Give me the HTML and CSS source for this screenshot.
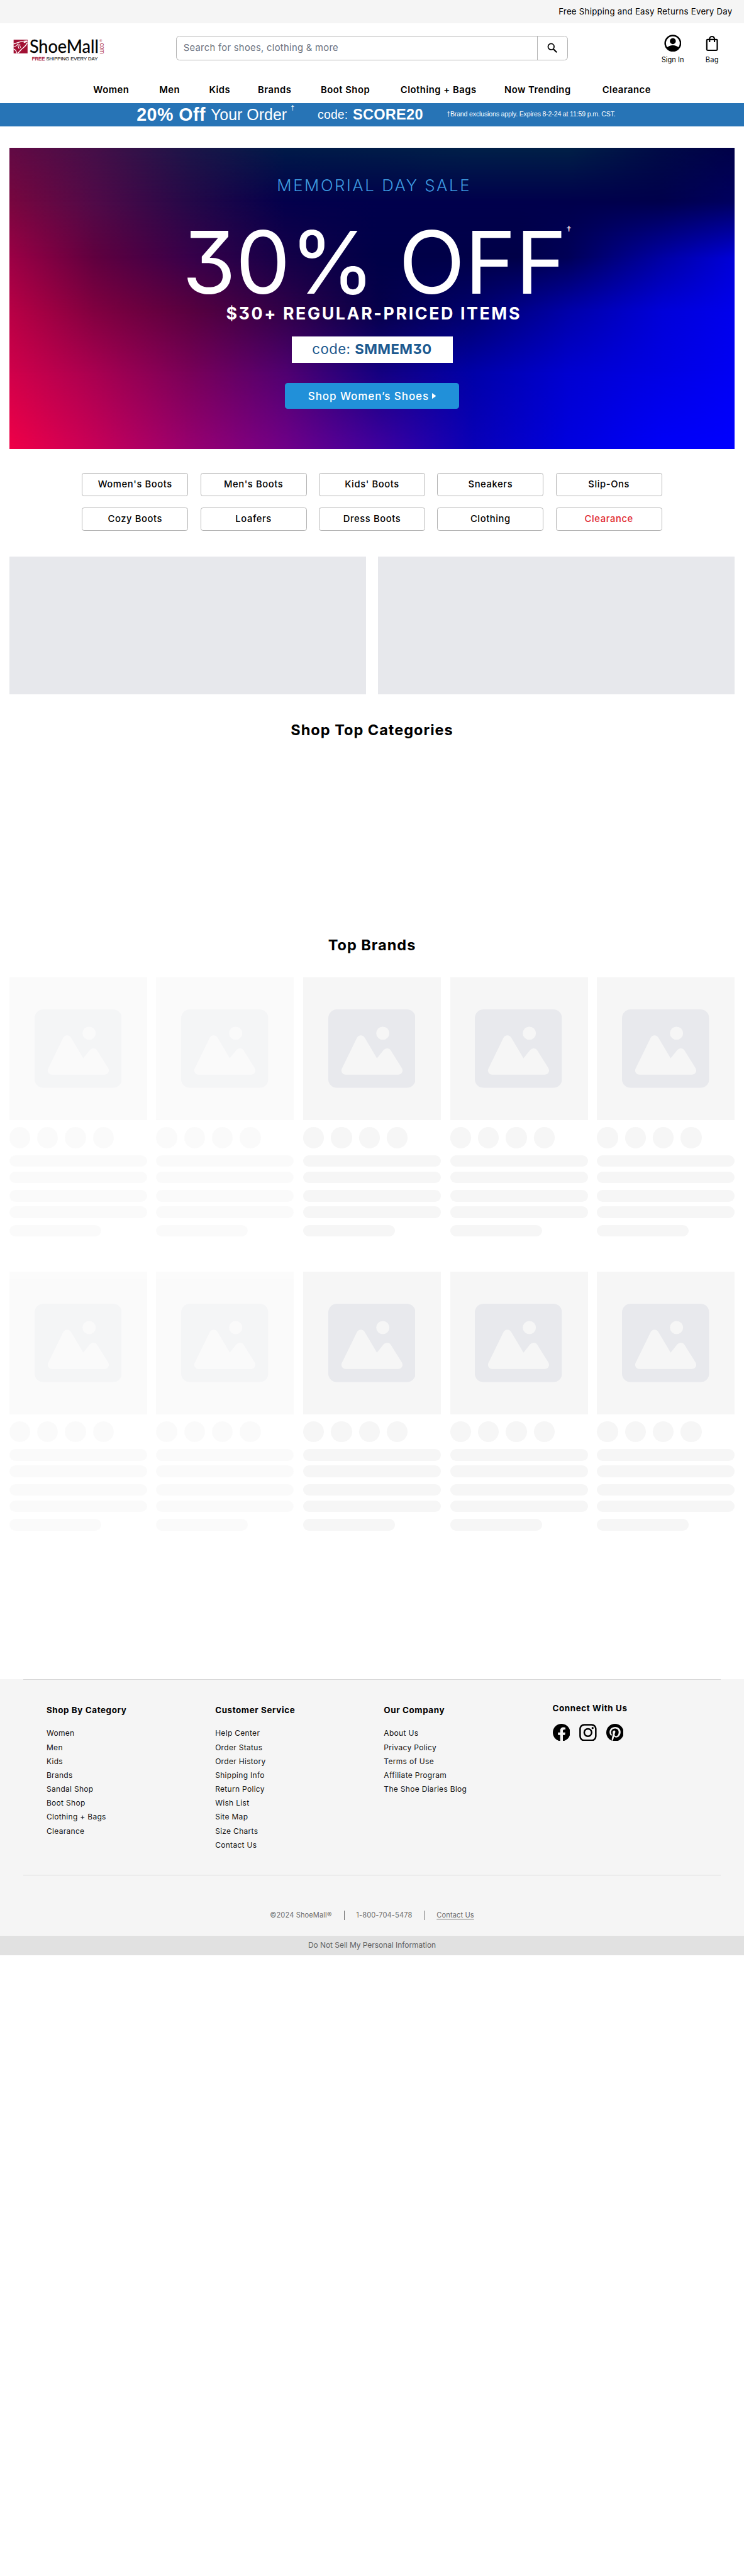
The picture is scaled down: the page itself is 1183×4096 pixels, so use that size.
FILE: index.html
```html
<!DOCTYPE html>
<html lang="en">
<head>
<meta charset="utf-8">
<title>ShoeMall</title>
<link rel="stylesheet" href="styles.css">
</head>
<body>
<svg width="0" height="0" class="sprite" aria-hidden="true">
  <symbol id="picture" viewBox="0 0 150 135">
    <rect width="150" height="135" rx="15" fill="#e8e9ed"/>
    <circle cx="93.8" cy="41" r="11.3" fill="#f6f6f6"/>
    <path fill="#f6f6f6" d="M23.6 101.500L49.500 48.500Q52 44.700 56 44.700Q60 44.700 62.500 48.500L83.700 84L95 70Q97.500 67 101 67Q105 67 107.500 70.500L126.500 101Q129 105.500 126.500 109Q124.500 112.300 120 112.300H30Q26 112.300 23.800 109Q21.500 105.500 23.600 101.500Z"/>
  </symbol>
</svg>
<div class="page">
  <div class="topbar">Free Shipping and Easy Returns Every Day</div>
  <header>
    <div class="masthead">
      <svg class="logo" viewBox="0 0 160 42" width="160" height="42">
        <rect x="0.700" y="2.300" width="24" height="23.500" fill="#a11033"/>
        <g fill="none" stroke="#fff" stroke-linecap="round">
          <path d="M1 9.500C8 7.500 14 4 23.500 4.500" stroke-width="1.600"/>
          <path d="M24 8C21 15 17 16 13.500 19.500C12 21.500 10 24 8 25" stroke-width="1.500"/>
          <path d="M1 14C4 14.500 6 12 8.500 9.500M1 18.500C3 19 5 21 6 25" stroke-width="1.300"/>
          <path d="M8.500 10.500C8 13 9 15.500 10 17.500M11.500 10C11 12 11.800 14 12.500 15.500" stroke-width="1.200"/>
          <path d="M19 7L23.500 5" stroke-width="2"/>
        </g>
        <text class="logo-name" x="28" y="25" textLength="119" lengthAdjust="spacingAndGlyphs">ShoeMall</text>
        <text class="logo-com" transform="translate(149 8) rotate(90)" textLength="18.500" lengthAdjust="spacingAndGlyphs">com</text>
        <text class="logo-reg" x="148.500" y="6">®</text>
        <text class="logo-tag" x="32.300" y="38" textLength="113" lengthAdjust="spacingAndGlyphs"><tspan class="logo-free">FREE</tspan> SHIPPING EVERY DAY</text>
      </svg>
      <div class="search">
        <div class="search-field">Search for shoes, clothing &amp; more</div>
        <div class="search-go">
          <svg viewBox="0 0 18 18" width="18" height="18" fill="none" stroke="#000" stroke-width="1.900"><circle cx="6.800" cy="6.800" r="5.200"/><path d="M10.500 10.500L16.500 16.500" stroke-width="2.300"/></svg>
        </div>
      </div>
      <div class="account">
        <svg viewBox="0 0 30 30" width="30" height="30"><circle cx="15" cy="14.800" r="13.200" fill="none" stroke="#000" stroke-width="2.700"/><circle cx="15" cy="11.300" r="5.100"/><path d="M4.500 22.500Q9 18.300 15 18.300Q21 18.300 25.500 22.500Q21.500 28.500 15 28.500Q8.500 28.500 4.500 22.500Z"/></svg>
        <span>Sign In</span>
      </div>
      <div class="account bag">
        <svg viewBox="0 0 22 30" width="22" height="30" fill="none" stroke="#000" stroke-width="2.300"><rect x="2" y="8.500" width="18" height="18.500" rx="1.500"/><path d="M6.800 13V7.500a4.200 4.200 0 0 1 8.400 0V13"/></svg>
        <span>Bag</span>
      </div>
    </div>
    <nav class="menu">
      <a>Women</a><a>Men</a><a>Kids</a><a>Brands</a><a>Boot Shop</a><a>Clothing + Bags</a><a>Now Trending</a><a>Clearance</a>
    </nav>
  </header>
  <div class="promo">
    <b class="promo-off">20% Off</b><span class="promo-order">Your Order</span><span class="promo-dagger">†</span><span class="promo-code">code:</span><b class="promo-score">SCORE20</b><span class="promo-note">†Brand exclusions apply. Expires 8-2-24 at 11:59 p.m. CST.</span>
  </div>

  <section class="hero">
    <div class="tint tint-5"></div><div class="tint tint-4"></div><div class="tint tint-3"></div><div class="tint tint-2"></div><div class="tint tint-1"></div><div class="tint tint-0"></div>
    <div class="hero-copy">
      <div class="hero-sale">MEMORIAL DAY SALE</div>
      <div class="hero-big">30% OFF<span class="hero-dagger">†</span></div>
      <div class="hero-items">$30+ REGULAR-PRICED ITEMS</div>
      <div class="hero-code"><span>code:</span> <b>SMMEM30</b></div>
      <div class="hero-button">Shop Women’s Shoes<svg viewBox="0 0 7 10" width="7" height="10"><path d="M0 0L7 5L0 10Z" fill="#fff"/></svg></div>
    </div>
  </section>

  <div class="shortcuts">
    <a>Women's Boots</a><a>Men's Boots</a><a>Kids' Boots</a><a>Sneakers</a><a>Slip-Ons</a>
    <a>Cozy Boots</a><a>Loafers</a><a>Dress Boots</a><a>Clothing</a><a class="sale">Clearance</a>
  </div>

  <div class="banners"><div></div><div></div></div>

  <h2 class="categories-title">Shop Top Categories</h2>
  <h2 class="brands-title">Top Brands</h2>

  <div class="cards" id="cards">
    <div class="card faded"><div class="thumb"><svg width="150" height="135"><use href="#picture"/></svg></div><div class="dots"><i></i><i></i><i></i><i></i></div><div class="bar"></div><div class="bar near"></div><div class="bar"></div><div class="bar near"></div><div class="bar short"></div></div>
    <div class="card faded"><div class="thumb"><svg width="150" height="135"><use href="#picture"/></svg></div><div class="dots"><i></i><i></i><i></i><i></i></div><div class="bar"></div><div class="bar near"></div><div class="bar"></div><div class="bar near"></div><div class="bar short"></div></div>
    <div class="card"><div class="thumb"><svg width="150" height="135"><use href="#picture"/></svg></div><div class="dots"><i></i><i></i><i></i><i></i></div><div class="bar"></div><div class="bar near"></div><div class="bar"></div><div class="bar near"></div><div class="bar short"></div></div>
    <div class="card"><div class="thumb"><svg width="150" height="135"><use href="#picture"/></svg></div><div class="dots"><i></i><i></i><i></i><i></i></div><div class="bar"></div><div class="bar near"></div><div class="bar"></div><div class="bar near"></div><div class="bar short"></div></div>
    <div class="card"><div class="thumb"><svg width="150" height="135"><use href="#picture"/></svg></div><div class="dots"><i></i><i></i><i></i><i></i></div><div class="bar"></div><div class="bar near"></div><div class="bar"></div><div class="bar near"></div><div class="bar short"></div></div>
    <div class="card faded"><div class="thumb"><svg width="150" height="135"><use href="#picture"/></svg></div><div class="dots"><i></i><i></i><i></i><i></i></div><div class="bar"></div><div class="bar near"></div><div class="bar"></div><div class="bar near"></div><div class="bar short"></div></div>
    <div class="card faded"><div class="thumb"><svg width="150" height="135"><use href="#picture"/></svg></div><div class="dots"><i></i><i></i><i></i><i></i></div><div class="bar"></div><div class="bar near"></div><div class="bar"></div><div class="bar near"></div><div class="bar short"></div></div>
    <div class="card"><div class="thumb"><svg width="150" height="135"><use href="#picture"/></svg></div><div class="dots"><i></i><i></i><i></i><i></i></div><div class="bar"></div><div class="bar near"></div><div class="bar"></div><div class="bar near"></div><div class="bar short"></div></div>
    <div class="card"><div class="thumb"><svg width="150" height="135"><use href="#picture"/></svg></div><div class="dots"><i></i><i></i><i></i><i></i></div><div class="bar"></div><div class="bar near"></div><div class="bar"></div><div class="bar near"></div><div class="bar short"></div></div>
    <div class="card"><div class="thumb"><svg width="150" height="135"><use href="#picture"/></svg></div><div class="dots"><i></i><i></i><i></i><i></i></div><div class="bar"></div><div class="bar near"></div><div class="bar"></div><div class="bar near"></div><div class="bar short"></div></div>
  </div>

  <footer>
    <div class="columns">
      <div><h3>Shop By Category</h3><a>Women</a><a>Men</a><a>Kids</a><a>Brands</a><a>Sandal Shop</a><a>Boot Shop</a><a>Clothing + Bags</a><a>Clearance</a></div>
      <div><h3>Customer Service</h3><a>Help Center</a><a>Order Status</a><a>Order History</a><a>Shipping Info</a><a>Return Policy</a><a>Wish List</a><a>Site Map</a><a>Size Charts</a><a>Contact Us</a></div>
      <div><h3>Our Company</h3><a>About Us</a><a>Privacy Policy</a><a>Terms of Use</a><a>Affiliate Program</a><a>The Shoe Diaries Blog</a></div>
      <div class="connect"><h3>Connect With Us</h3>
        <div class="social">
          <svg viewBox="2 2 20 20" width="30" height="30"><path d="M22 12c0-5.520-4.480-10-10-10S2 6.480 2 12c0 4.990 3.660 9.130 8.440 9.880v-6.990H7.900V12h2.540V9.800c0-2.510 1.490-3.890 3.780-3.890 1.090 0 2.240.19 2.240.19v2.460h-1.260c-1.240 0-1.630.77-1.630 1.560V12h2.780l-.45 2.890h-2.330v6.990C18.340 21.130 22 16.990 22 12z"/></svg>
          <svg viewBox="0 0 30 30" width="30" height="30" fill="none" stroke="#000" stroke-width="2.700"><rect x="1.500" y="1.500" width="27" height="27" rx="7"/><circle cx="15" cy="15" r="6.400"/><circle cx="23" cy="7.200" r="1.800" fill="#000" stroke="none"/></svg>
          <svg viewBox="2 2 20 20" width="30" height="30"><path d="M9.040 21.540c.96.29 1.930.46 2.960.46a10 10 0 0 0 10-10A10 10 0 0 0 12 2 10 10 0 0 0 2 12c0 4.250 2.670 7.900 6.440 9.340-.09-.78-.18-2.070 0-2.960l1.150-4.940s-.29-.58-.29-1.500c0-1.380.86-2.410 1.840-2.410.86 0 1.260.63 1.260 1.440 0 .86-.57 2.090-.86 3.270-.17.98.52 1.840 1.520 1.840 1.780 0 3.160-1.900 3.160-4.580 0-2.400-1.720-4.040-4.190-4.040-2.820 0-4.480 2.100-4.480 4.310 0 .86.28 1.730.74 2.300.09.06.09.14.06.29l-.29 1.090c0 .17-.11.23-.28.11-1.280-.56-2.020-2.380-2.020-3.850 0-3.160 2.240-6.030 6.560-6.030 3.440 0 6.120 2.470 6.120 5.750 0 3.440-2.130 6.200-5.180 6.200-.97 0-1.920-.52-2.260-1.130l-.67 2.370c-.23.86-.86 2.010-1.290 2.700z"/></svg>
        </div>
      </div>
    </div>
    <div class="legal"><span>©2024 ShoeMall®</span><span>1-800-704-5478</span><span><u>Contact Us</u></span></div>
    <div class="privacy">Do Not Sell My Personal Information</div>
  </footer>
</div>
</body>
</html>
```

FILE: styles.css
```css
* { box-sizing: border-box; }
html { background: #fff; }
body { margin: 0; overflow-x: hidden; }
.sprite { position: absolute; }
.page {
  zoom: 0.92422;
  width: 1280px;
  height: 4431px;
  overflow: hidden;
  font-family: Inter, "Noto Sans", sans-serif;
  font-size: 16px;
  color: #000;
  background: #fff;
}
svg { display: block; flex: none; }

/* Header */
.topbar {
  height: 40px;
  padding: 0 20px 1px 0;
  line-height: 39px;
  background: #f5f5f5;
  font-size: 14.300px;
  letter-spacing: 0.300px;
  text-align: right;
}
.masthead { display: flex; height: 86px; padding: 20px 43.500px 0 23px; align-items: flex-start; }
.logo { margin-top: 6px; overflow: visible; }
.logo-name { font: 400 32px Lato, sans-serif; stroke: #000; stroke-width: 0.300px; }
.logo-com { font: 400 12px "Liberation Sans", sans-serif; fill: #a11033; }
.logo-reg { font: 400 6px "Liberation Sans", sans-serif; fill: #a11033; }
.logo-tag { font: 400 8.500px "Liberation Sans", sans-serif; fill: #111; stroke: #111; stroke-width: 0.150px; }
.logo-free { fill: #a11033; stroke: #a11033; stroke-width: 0.350px; }
.search {
  display: flex;
  width: 674px;
  height: 42px;
  margin: 2px auto 0 120px;
  border: 1px solid #b3b3b3;
  border-radius: 6px;
}
.search-field { flex: 1; padding-left: 11.500px; line-height: 40px; color: #6b7280; letter-spacing: 0.330px; }
.search-go { display: flex; width: 52px; align-items: center; justify-content: center; border-left: 1px solid #b3b3b3; }
.account { display: flex; flex-direction: column; align-items: center; font-size: 12px; line-height: 16px; white-space: nowrap; }
.account span { margin-top: 5px; }
.bag { margin-left: 37px; letter-spacing: 0.300px; }
.menu {
  display: grid;
  grid-template-columns: 113.500px 85.700px 84px 108.200px 137.200px 178.600px 168.500px auto;
  height: 51px;
  padding: 19px 0 0 160.500px;
  line-height: 20px;
  font-weight: 600;
  letter-spacing: 0.550px;
}

/* Promo strip */
.promo {
  display: grid;
  grid-template-columns: 127.500px 138px 46px 60.500px 161.500px auto;
  align-items: center;
  height: 41px;
  padding-left: 235px;
  background: #2774b6;
  color: #fff;
  font-family: "Liberation Sans", Arial, sans-serif;
  line-height: 1;
  white-space: nowrap;
}
.promo-off { font-size: 31px; letter-spacing: 0.500px; }
.promo-order { font-size: 27px; letter-spacing: 0; }
.promo-dagger { align-self: start; margin-top: 4px; font-size: 11px; }
.promo-code { font-size: 21px; letter-spacing: 0.200px; }
.promo-score { font-size: 25.500px; letter-spacing: 0.300px; }
.promo-note { margin-top: -3px; font-size: 11.500px; letter-spacing: -0.200px; }

/* Hero */
.hero { position: relative; height: 518.500px; margin: 36.500px 16px 0; color: #fff; }
.tint { position: absolute; inset: 0; }
.tint-0 {
  background: linear-gradient(90deg, #620a44, #440f48 11.800%, #1c1548 24.900%, #001a48 38%, #001c48 51%, #002048 64%, #002046 77%, #000a46 90%, #000048);
  mask-image: linear-gradient(#000, transparent 18%);
}
.tint-1 {
  background: linear-gradient(90deg, #78063f, #500a48 11.800%, #250848 24.900%, #04004c 38%, #00004c 51%, #00004c 90%, #000060);
  mask-image: linear-gradient(#000 18%, transparent 36.500%);
}
.tint-2 {
  background: linear-gradient(90deg, #9c0045, #60003f 11.800%, #38004a 24.900%, #150048 38%, #000048 51%, #000048 70%, #000058 77%, #0000a4 90%, #0000d8);
  mask-image: linear-gradient(#000 36.500%, transparent 54%);
}
.tint-3 {
  background: linear-gradient(90deg, #b80045, #800040 11.800%, #58003f 24.900%, #300048 38%, #06004a 51%, #00006c 64%, #0000a8 77%, #0000d8 90%, #0000ec);
  mask-image: linear-gradient(#000 54%, transparent 74.500%);
}
.tint-4 {
  background: linear-gradient(90deg, #d0004a, #a80050 11.800%, #780058 24.900%, #500070 38%, #140080 51%, #0000a8 64%, #0000d0 77%, #0000e4 90%, #0000f4);
  mask-image: linear-gradient(#000 74.500%, transparent);
}
.tint-5 {
  background: linear-gradient(90deg, #f00048, #c80058 11.800%, #980070 24.900%, #700088 38%, #4000a0 51%, #0a00b8 64%, #0000e0 77%, #0000f8 90%, #0000ff);
}
.hero-copy { position: relative; display: flex; flex-direction: column; align-items: center; height: 100%; padding-top: 50px; white-space: nowrap; }
.hero-sale { padding-left: 7px; font-size: 28px; font-weight: 350; line-height: 30px; letter-spacing: 2.750px; color: #3d9be0; }
.hero-big { position: relative; margin-top: 42px; padding-left: 8px; font-size: 149px; line-height: 150px; letter-spacing: -0.500px; font-feature-settings: "cv09"; }
.hero-dagger { position: absolute; left: 100%; top: 8px; font-size: 18px; line-height: 24px; }
.hero-items { margin-top: -0.500px; padding-left: 6px; font-size: 29px; font-weight: 700; line-height: 28px; letter-spacing: 2.800px; font-feature-settings: "cv09"; }
.hero-code {
  width: 277px;
  height: 46px;
  margin-top: 24.500px;
  background: #fff;
  color: #1c5a90;
  font-size: 24px;
  line-height: 44px;
  letter-spacing: 0.500px;
  text-align: center;
  font-feature-settings: "cv09";
}
.hero-button {
  display: flex;
  align-items: center;
  justify-content: center;
  gap: 5px;
  width: 300px;
  height: 45px;
  margin-top: 34px;
  border-radius: 5px;
  background: #2190d9;
  font-size: 18.500px;
  font-weight: 550;
  letter-spacing: 0.950px;
}

/* Shortcut buttons */
.shortcuts {
  display: grid;
  grid-template-columns: repeat(5, 1fr);
  gap: 20px 21px;
  margin: 40.300px 141px 0;
}
.shortcuts a { height: 40px; border: 1px solid #b3b3b3; border-radius: 4px; line-height: 38px; font-weight: 450; letter-spacing: 0.650px; text-align: center; }
.shortcuts .sale { color: #e0242b; }

.banners { display: grid; grid-template-columns: 1fr 1fr; gap: 20px; margin: 44.700px 16px 0; }
.banners div { height: 237px; background: #e7e8ec; }

h2 { margin: 0; font-size: 25.500px; line-height: 30px; font-weight: 700; letter-spacing: 1.050px; text-align: center; }
.categories-title { margin-top: 46px; }
.brands-title { margin-top: 340px; }

/* Loading cards */
.cards { display: grid; grid-template-columns: repeat(5, 1fr); gap: 60px 16px; margin: 40.500px 16px 0; }
.card { height: 446px; }
.faded { opacity: 0.450; }
.thumb { height: 246px; padding-top: 55.600px; background: #f6f6f6; }
.thumb svg { margin-left: 43px; }
.dots { display: flex; gap: 12px; margin-top: 12px; }
.dots i { width: 36px; height: 36px; border-radius: 50%; background: #f6f6f6; }
.bar { height: 20px; margin-top: 12px; border-radius: 10px; background: #f6f6f6; }
.near { margin-top: 8px; }
.short { width: 66.670%; }

/* Footer */
footer { margin-top: 255.500px; background: #f5f5f5; }
.columns {
  display: grid;
  grid-template-columns: repeat(4, 290.200px);
  height: 338px;
  margin: 0 40px;
  padding: 42.500px 0 0 40px;
  border-top: 1px solid #d9d9d9;
  border-bottom: 1px solid #d9d9d9;
  white-space: nowrap;
}
h3 { margin: 0 0 18px; font-size: 14.500px; line-height: 20px; font-weight: 700; letter-spacing: 0.650px; }
.columns a { display: block; font-size: 13px; line-height: 24px; letter-spacing: 0.330px; color: #111; }
.connect { margin-top: -3px; }
.connect h3 { margin-bottom: 16px; }
.social { display: flex; gap: 16px; }
.legal { display: flex; justify-content: center; align-items: center; height: 104px; padding-top: 33px; color: #6b6b6b; font-size: 12px; line-height: 16px; letter-spacing: 0.120px; }
.legal span + span { margin-left: 21px; padding-left: 20px; border-left: 1px solid #6b6b6b; }
.legal u { text-underline-offset: 2px; }
.privacy { height: 33px; background: #e1e1e1; color: #606060; font-size: 13px; line-height: 32px; letter-spacing: -0.060px; text-align: center; }
```
